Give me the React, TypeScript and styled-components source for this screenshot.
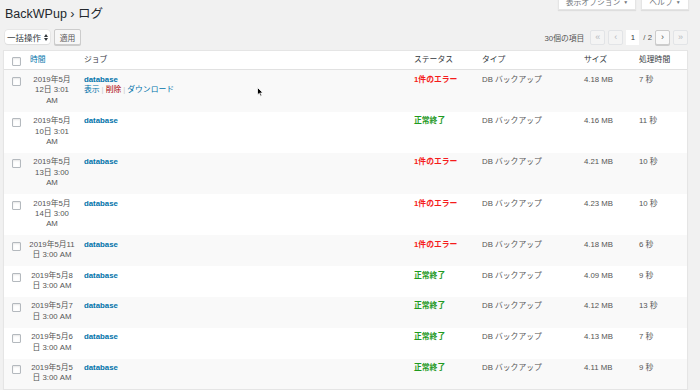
import React from "react";
import styled, { createGlobalStyle } from "styled-components";

const GlobalStyle = createGlobalStyle`
  html, body {
    margin: 0;
    padding: 0;
    background: #f1f1f1;
  }
  body {
    width: 700px;
    height: 390px;
    overflow: hidden;
    font-family: "Liberation Sans", "Noto Sans CJK JP", sans-serif;
    font-size: 7.8px;
    color: #555;
  }
  * { box-sizing: border-box; }
`;

const COLS = "22px 52px 1fr 68px 102px 55px 54px";

const Page = styled.div`
  position: relative;
  height: 390px;
  padding: 0 12px 0 3px;
`;

const TopBar = styled.div`
  display: flex;
  justify-content: space-between;
  align-items: flex-start;
  height: 22px;
`;

const Title = styled.h1`
  margin: 6px 0 0 2px;
  font-size: 12.5px;
  font-weight: 400;
  line-height: 16px;
  color: #23282d;
`;

const ScreenMeta = styled.div`
  display: flex;
  gap: 5px;
  margin-top: -4px;
  margin-right: -1px;
`;

const MetaTab = styled.div<{ $w: number }>`
  width: ${(p) => p.$w}px;
  height: 14px;
  background: #fff;
  border: 1px solid #e5e5e5;
  border-top: none;
  box-shadow: 0 1px 1px rgba(0, 0, 0, 0.08);
  color: #72777c;
  font-size: 7.8px;
  line-height: 13px;
  text-align: center;
  white-space: nowrap;
`;

const Caret = styled.span`
  font-size: 5px;
  margin-left: 3px;
  vertical-align: 1px;
`;

const Toolbar = styled.div`
  display: flex;
  justify-content: space-between;
  align-items: center;
  height: 16px;
  margin-top: 7px;
  padding-left: 2px;
`;

const BulkGroup = styled.div`
  display: flex;
  align-items: center;
  gap: 4px;
`;

const FakeSelect = styled.div`
  width: 45px;
  height: 14px;
  display: flex;
  align-items: center;
  justify-content: space-between;
  padding: 0 2px 0 2px;
  background: #fff;
  border-radius: 3px;
  box-shadow: 0 0 0 0.5px #ddd, 0 1px 1px rgba(0, 0, 0, 0.08);
  font-size: 8.5px;
  color: #32373c;
`;

const ApplyButton = styled.div`
  width: 27px;
  height: 16px;
  display: flex;
  align-items: center;
  justify-content: center;
  background: #f7f7f7;
  border: 1px solid #ccc;
  border-radius: 2px;
  box-shadow: 0 1px 0 #ccc;
  font-size: 7.8px;
  color: #555;
`;

const Pagination = styled.div`
  display: flex;
  align-items: center;
  gap: 3px;
`;

const ItemCount = styled.span`
  margin-right: 3px;
  color: #555;
`;

const PageButton = styled.div<{ $disabled?: boolean }>`
  width: 15px;
  height: 15px;
  display: flex;
  align-items: center;
  justify-content: center;
  font-size: 9px;
  border-radius: 2px;
  border: 1px solid ${(p) => (p.$disabled ? "#e2e4e7" : "#ccc")};
  background: ${(p) => (p.$disabled ? "#f4f4f4" : "#f9f9f9")};
  color: ${(p) => (p.$disabled ? "#b4b9be" : "#555")};
  box-shadow: ${(p) => (p.$disabled ? "none" : "0 1px 0 #ccc")};
`;

const PageInput = styled.div`
  width: 13px;
  height: 15px;
  display: flex;
  align-items: center;
  justify-content: center;
  background: #fff;
  color: #32373c;
  font-size: 7.8px;
`;

const PageTotal = styled.span`
  color: #555;
  margin: 0 0 0 1px;
`;

const Table = styled.div`
  margin-top: 5px;
  background: #fff;
  border: 1px solid #e5e5e5;
  box-shadow: 0 1px 1px rgba(0, 0, 0, 0.04);
`;

const HeadRow = styled.div`
  display: grid;
  grid-template-columns: ${COLS};
  border-bottom: 1px solid #e1e1e1;
`;

const HeadCell = styled.div<{ $pad?: number }>`
  padding: 4px 0 4px ${(p) => p.$pad ?? 6}px;
  line-height: 10.4px;
  color: #32373c;
  white-space: nowrap;
`;

const SortLink = styled.span`
  color: #0073aa;
`;

const Row = styled.div<{ $alt: boolean }>`
  display: grid;
  grid-template-columns: ${COLS};
  background: ${(p) => (p.$alt ? "#f9f9f9" : "#fff")};
`;

const CheckCell = styled.div<{ $top: number }>`
  padding: ${(p) => p.$top}px 0 0 8px;
`;

const Checkbox = styled.div`
  width: 9px;
  height: 9px;
  background: #fff;
  border: 1px solid #b4b9be;
  border-radius: 1px;
  box-shadow: inset 0 1px 2px rgba(0, 0, 0, 0.1);
`;

const Cell = styled.div`
  padding: 4.5px 0 5.5px 6px;
  line-height: 10.4px;
  color: #555;
  white-space: nowrap;
`;

const DateCell = styled.div`
  padding: 4.5px 0 5.5px 0;
  line-height: 10.4px;
  color: #555;
  text-align: center;
  white-space: nowrap;
`;

const DateLine = styled.span`
  display: block;
`;

const JobLink = styled.span`
  display: block;
  color: #0073aa;
  font-weight: 700;
`;

const RowActions = styled.div`
  display: flex;
  align-items: center;
`;

const Action = styled.span<{ $danger?: boolean }>`
  color: ${(p) => (p.$danger ? "#a00" : "#0073aa")};
`;

const Sep = styled.span`
  color: #ccc;
  margin: 0 2px;
`;

const Status = styled.span<{ $ok: boolean }>`
  font-weight: 700;
  color: ${(p) => (p.$ok ? "#1f9a1f" : "#f51c1c")};
`;

const Cursor = styled.svg`
  position: absolute;
  left: 257px;
  top: 87px;
`;

type LogRow = {
  date: string[];
  ok: boolean;
  size: string;
  time: string;
  actions?: boolean;
};

const rows: LogRow[] = [
  { date: ["2019年5月", "12日 3:01", "AM"], ok: false, size: "4.18 MB", time: "7 秒", actions: true },
  { date: ["2019年5月", "10日 3:01", "AM"], ok: true, size: "4.16 MB", time: "11 秒" },
  { date: ["2019年5月", "13日 3:00", "AM"], ok: false, size: "4.21 MB", time: "10 秒" },
  { date: ["2019年5月", "14日 3:00", "AM"], ok: false, size: "4.23 MB", time: "10 秒" },
  { date: ["2019年5月11", "日 3:00 AM"], ok: false, size: "4.18 MB", time: "6 秒" },
  { date: ["2019年5月8", "日 3:00 AM"], ok: true, size: "4.09 MB", time: "9 秒" },
  { date: ["2019年5月7", "日 3:00 AM"], ok: true, size: "4.12 MB", time: "13 秒" },
  { date: ["2019年5月6", "日 3:00 AM"], ok: true, size: "4.13 MB", time: "7 秒" },
  { date: ["2019年5月5", "日 3:00 AM"], ok: true, size: "4.11 MB", time: "9 秒" },
];

const SelectArrows = () => (
  <svg width="4" height="7" viewBox="0 0 4 7">
    <path d="M0 3 L2 0 L4 3 Z M0 4 L2 7 L4 4 Z" fill="#32373c" />
  </svg>
);

export default function App() {
  return (
    <Page>
      <GlobalStyle />
      <TopBar>
        <Title>BackWPup › ログ</Title>
        <ScreenMeta>
          <MetaTab $w={78}>
            表示オプション<Caret>▼</Caret>
          </MetaTab>
          <MetaTab $w={48}>
            ヘルプ<Caret>▼</Caret>
          </MetaTab>
        </ScreenMeta>
      </TopBar>

      <Toolbar>
        <BulkGroup>
          <FakeSelect>
            一括操作
            <SelectArrows />
          </FakeSelect>
          <ApplyButton>適用</ApplyButton>
        </BulkGroup>
        <Pagination>
          <ItemCount>30個の項目</ItemCount>
          <PageButton $disabled>«</PageButton>
          <PageButton $disabled>‹</PageButton>
          <PageInput>1</PageInput>
          <PageTotal>/ 2</PageTotal>
          <PageButton>›</PageButton>
          <PageButton $disabled>»</PageButton>
        </Pagination>
      </Toolbar>

      <Table>
        <HeadRow>
          <CheckCell $top={5.5}>
            <Checkbox />
          </CheckCell>
          <HeadCell $pad={4}>
            <SortLink>時間</SortLink>
          </HeadCell>
          <HeadCell>ジョブ</HeadCell>
          <HeadCell>ステータス</HeadCell>
          <HeadCell>タイプ</HeadCell>
          <HeadCell>サイズ</HeadCell>
          <HeadCell>処理時間</HeadCell>
        </HeadRow>
        {rows.map((r, i) => (
          <Row key={i} $alt={i % 2 === 0}>
            <CheckCell $top={6.5}>
              <Checkbox />
            </CheckCell>
            <DateCell>
              {r.date.map((l) => (
                <DateLine key={l}>{l}</DateLine>
              ))}
            </DateCell>
            <Cell>
              <JobLink>database</JobLink>
              {r.actions && (
                <RowActions>
                  <Action>表示</Action>
                  <Sep>|</Sep>
                  <Action $danger>削除</Action>
                  <Sep>|</Sep>
                  <Action>ダウンロード</Action>
                </RowActions>
              )}
            </Cell>
            <Cell>
              <Status $ok={r.ok}>{r.ok ? "正常終了" : "1件のエラー"}</Status>
            </Cell>
            <Cell>DB バックアップ</Cell>
            <Cell>{r.size}</Cell>
            <Cell>{r.time}</Cell>
          </Row>
        ))}
      </Table>

      <Cursor width="7" height="10" viewBox="0 0 7 10">
        <path d="M0.5 0.5 L0.5 8 L2.3 6.3 L3.6 9.3 L4.8 8.8 L3.6 5.9 L6 5.9 Z" fill="#000" stroke="#fff" strokeWidth="0.8" />
      </Cursor>
    </Page>
  );
}
